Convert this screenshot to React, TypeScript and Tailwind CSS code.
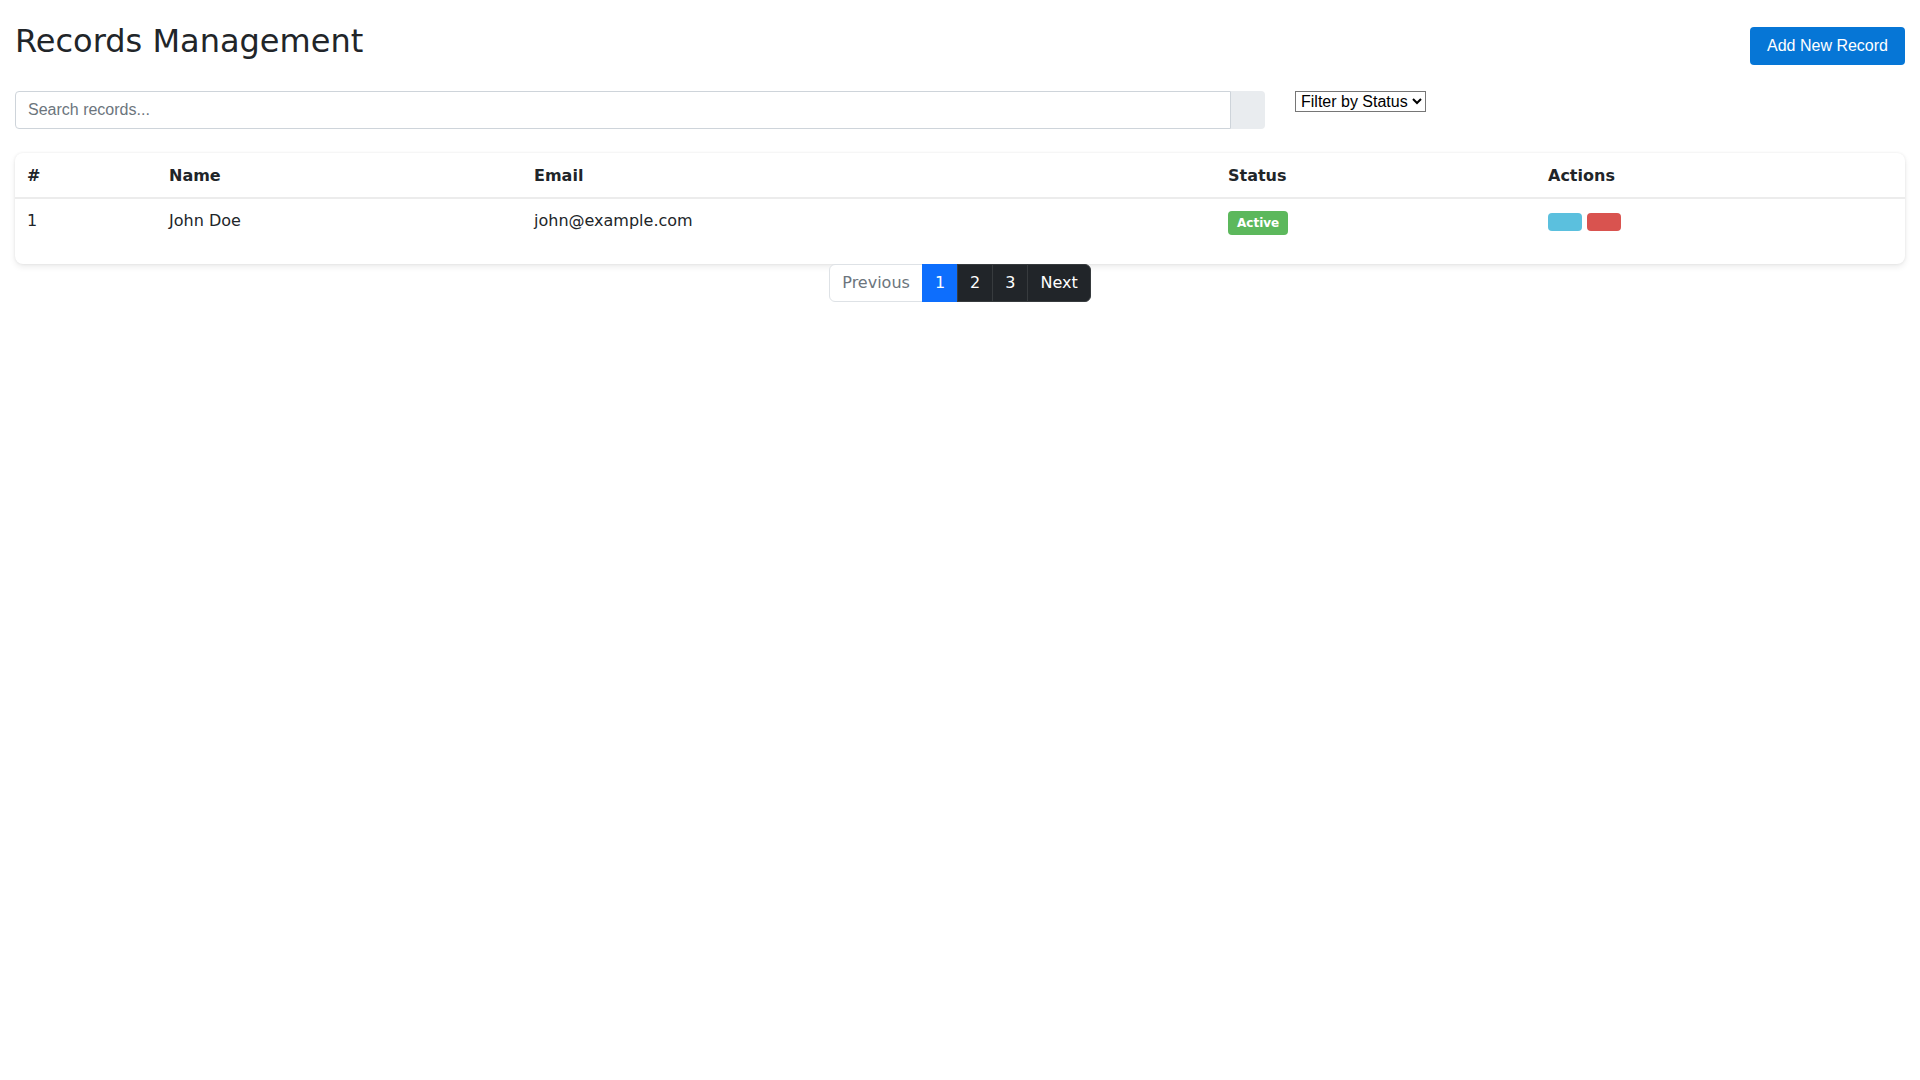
import React from "react";

export default function App() {
  const cellFont = { fontFamily: '"DejaVu Sans", sans-serif' };
  return (
    <div
      className="min-h-screen bg-white px-[15px] pt-[22px] text-[16px] leading-[1.5] text-[#212529]"
      style={cellFont}
    >
      {/* Header */}
      <div className="flex items-start justify-between">
        <h2 className="m-0 text-[32px] font-medium leading-[1.2] text-[#212529]">
          Records Management
        </h2>
        <button
          className="mt-[5px] flex h-[38px] w-[155px] items-center justify-center rounded-[4px] bg-[#0676d6] text-[16px] text-white"
          style={{ fontFamily: '"Liberation Sans", Arial, sans-serif' }}
        >
          Add New Record
        </button>
      </div>

      {/* Search + filter */}
      <div className="mt-[26px] flex items-start">
        <div className="flex w-[1250px]">
          <input
            type="text"
            placeholder="Search records..."
            className="h-[38px] flex-1 rounded-l-[4px] border border-[#ced4da] bg-white px-3 text-[16px] text-[#212529] outline-none placeholder:text-[#6c757d]"
            style={{ fontFamily: '"Liberation Sans", Arial, sans-serif' }}
          />
          <div className="h-[38px] w-[34px] rounded-r-[4px] bg-[#e9ecef]" />
        </div>
        <select
          className="ml-[30px] h-[21px] border border-[#767676] bg-white px-[1px] text-[16px] leading-[normal] text-black"
          style={{ fontFamily: '"Liberation Sans", Arial, sans-serif' }}
          defaultValue=""
        >
          <option value="">Filter by Status</option>
          <option value="active">Active</option>
          <option value="inactive">Inactive</option>
        </select>
      </div>

      {/* Table card */}
      <div className="mt-[24px] rounded-[8px] bg-white pb-4 shadow-[0_0_3px_rgba(0,0,0,0.08),0_3px_6px_rgba(0,0,0,0.08)]">
        <table className="w-full table-fixed border-collapse">
          <colgroup>
            <col className="w-[142px]" />
            <col className="w-[365px]" />
            <col className="w-[694px]" />
            <col className="w-[320px]" />
            <col className="w-[369px]" />
          </colgroup>
          <thead>
            <tr className="border-b-2 border-[#ececec]">
              <th className="px-3 pb-[9px] pt-[11px] text-left font-bold">#</th>
              <th className="px-3 pb-[9px] pt-[11px] text-left font-bold">Name</th>
              <th className="px-3 pb-[9px] pt-[11px] text-left font-bold">Email</th>
              <th className="px-3 pb-[9px] pt-[11px] text-left font-bold">Status</th>
              <th className="px-3 pb-[9px] pt-[11px] text-left font-bold">Actions</th>
            </tr>
          </thead>
          <tbody>
            <tr>
              <td className="h-[48px] px-3 pb-[14px] pt-[10px] align-top">1</td>
              <td className="h-[48px] px-3 pb-[14px] pt-[10px] align-top">John Doe</td>
              <td className="h-[48px] px-3 pb-[14px] pt-[10px] align-top">john@example.com</td>
              <td className="h-[48px] px-3 pb-[13px] pt-[11px] align-top">
                <span className="inline-flex h-[24px] items-center rounded-[4px] bg-[#5cb85c] px-[9px] text-[12px] font-bold leading-none text-white">
                  Active
                </span>
              </td>
              <td className="h-[48px] px-3 pb-[16px] pt-[14px] align-top">
                <div className="flex gap-[5px]">
                  <button className="h-[18px] w-[34px] rounded-[4px] bg-[#5bc0de]" />
                  <button className="h-[18px] w-[34px] rounded-[4px] bg-[#d9534f]" />
                </div>
              </td>
            </tr>
          </tbody>
        </table>
      </div>

      {/* Pagination */}
      <div className="flex justify-center">
        <div className="flex">
          <span className="flex h-[38px] items-center rounded-l-[6px] border border-[#dee2e6] bg-white px-3 text-[#6c757d]">
            Previous
          </span>
          <span className="-ml-px flex h-[38px] items-center border border-[#0d6efd] bg-[#0d6efd] px-3 text-white">
            1
          </span>
          <span className="-ml-px flex h-[38px] items-center border border-[#373b3e] bg-[#212529] px-3 text-white">
            2
          </span>
          <span className="-ml-px flex h-[38px] items-center border border-[#373b3e] bg-[#212529] px-3 text-white">
            3
          </span>
          <span className="-ml-px flex h-[38px] items-center rounded-r-[6px] border border-[#373b3e] bg-[#212529] px-3 text-white">
            Next
          </span>
        </div>
      </div>
    </div>
  );
}
